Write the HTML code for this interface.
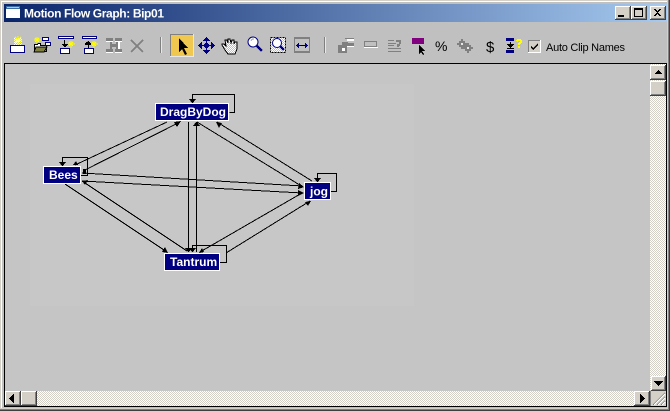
<!DOCTYPE html>
<html><head><meta charset="utf-8"><style>
html,body{margin:0;padding:0;width:670px;height:411px;overflow:hidden;background:#c0c0c0}
svg{display:block;position:absolute;left:0;top:0}
text{font-family:"Liberation Sans",sans-serif}
</style></head><body>
<svg width="670" height="411" viewBox="0 0 670 411" xmlns="http://www.w3.org/2000/svg">
<defs>
<linearGradient id="tb" x1="0" x2="1" y1="0" y2="0"><stop offset="0" stop-color="#0a246a"/><stop offset="1" stop-color="#a6caf0"/></linearGradient>
<pattern id="ck" width="2" height="2" patternUnits="userSpaceOnUse"><rect width="2" height="2" fill="#fff"/><rect width="1" height="1" fill="#d4d0c8"/><rect x="1" y="1" width="1" height="1" fill="#d4d0c8"/></pattern>
<pattern id="ck2" width="2" height="2" patternUnits="userSpaceOnUse"><rect width="2" height="2" fill="#c0c0c0"/><rect width="1" height="1" fill="#fff"/><rect x="1" y="1" width="1" height="1" fill="#fff"/></pattern>
</defs>

<!-- frame -->
<g shape-rendering="crispEdges">
<rect width="670" height="411" fill="#404040"/>
<rect width="669" height="410" fill="#808080"/>
<rect width="668" height="409" fill="#d4d0c8"/>
<rect x="1" y="1" width="666" height="407" fill="#fff"/>
<rect x="2" y="2" width="665" height="406" fill="#c0c0c0"/>
<!-- title -->
<rect x="4" y="4" width="663" height="18" fill="url(#tb)"/>
<rect x="6" y="6" width="14" height="12" fill="#fff"/>
<rect x="6" y="6" width="14" height="3" fill="#3a6ea5"/>
<rect x="7" y="7" width="12" height="1" fill="#a6caf0"/>
</g>
<text x="24" y="17.5" font-size="12" font-weight="bold" fill="#fff" textLength="140" lengthAdjust="spacing">Motion Flow Graph: Bip01</text>
<g shape-rendering="crispEdges">
<!-- caption buttons -->
<g id="cb">
<rect x="615" y="6" width="16" height="14" fill="#404040"/><rect x="615" y="6" width="15" height="13" fill="#fff"/><rect x="616" y="7" width="14" height="12" fill="#808080"/><rect x="616" y="7" width="13" height="11" fill="#d4d0c8"/>
<rect x="618" y="15" width="6" height="2" fill="#000"/>
<rect x="631" y="6" width="16" height="14" fill="#404040"/><rect x="631" y="6" width="15" height="13" fill="#fff"/><rect x="632" y="7" width="14" height="12" fill="#808080"/><rect x="632" y="7" width="13" height="11" fill="#d4d0c8"/>
<rect x="634.5" y="8.5" width="8" height="8" fill="none" stroke="#000"/><rect x="634" y="8" width="9" height="2" fill="#000"/>
<rect x="650" y="6" width="16" height="14" fill="#404040"/><rect x="650" y="6" width="15" height="13" fill="#fff"/><rect x="651" y="7" width="14" height="12" fill="#808080"/><rect x="651" y="7" width="13" height="11" fill="#d4d0c8"/>
<path d="M654 9h2v1h1v1h1v-1h1v-1h2v1h-1v1h-1v1h-1v1h1v1h1v1h1v1h-2v-1h-1v-1h-1v1h-1v1h-2v-1h1v-1h1v-1h1v-1h-1v-1h-1v-1h-1z" fill="#000"/>
</g>

<!-- canvas -->
<rect x="4" y="63" width="663" height="344" fill="#000"/>
<rect x="5" y="64" width="661" height="342" fill="#c5c5c5"/>
<rect x="30" y="84" width="384" height="222" fill="#c7c7c7"/>

<!-- scrollbars -->
<rect x="650" y="64" width="16" height="327" fill="url(#ck)"/>
<rect x="5" y="391" width="645" height="15" fill="url(#ck)"/>
<rect x="650" y="391" width="16" height="15" fill="#d4d0c8"/>
<rect x="650" y="391" width="1" height="15" fill="#808080"/>
<path d="M665 393l-12 12M665 397l-8 8M665 401l-4 4" stroke="#808080" fill="none"/>
<path d="M665 394l-11 11M665 398l-7 7M665 402l-3 3" stroke="#fff" fill="none"/>
<!-- sb buttons -->
<g>
<rect x="650" y="65" width="16" height="15" fill="#404040"/><rect x="650" y="65" width="15" height="14" fill="#fff"/><rect x="651" y="66" width="14" height="13" fill="#808080"/><rect x="651" y="66" width="13" height="12" fill="#d4d0c8"/>
<path d="M658 70h1v1h1v1h1v1h1v1h-7v-1h1v-1h1v-1h1z" fill="#000"/>
<rect x="650" y="81" width="16" height="15" fill="#404040"/><rect x="650" y="81" width="15" height="14" fill="#fff"/><rect x="651" y="82" width="14" height="13" fill="#808080"/><rect x="651" y="82" width="13" height="12" fill="#d4d0c8"/>
<rect x="651" y="376" width="15" height="15" fill="#404040"/><rect x="651" y="376" width="14" height="14" fill="#fff"/><rect x="652" y="377" width="13" height="13" fill="#808080"/><rect x="652" y="377" width="12" height="12" fill="#d4d0c8"/>
<path d="M654 381h9v1h-1v1h-1v1h-1v1h-1v1h-1v-1h-1v-1h-1v-1h-1v-1h-1z" fill="#000"/>
<rect x="5" y="391" width="16" height="15" fill="#404040"/><rect x="5" y="391" width="15" height="14" fill="#fff"/><rect x="6" y="392" width="14" height="13" fill="#808080"/><rect x="6" y="392" width="13" height="12" fill="#d4d0c8"/>
<path d="M14 394v9h-1v-1h-1v-1h-1v-1h-1v-1h-1v-1h1v-1h1v-1h1v-1h1v-1z" fill="#000"/>
<rect x="21" y="391" width="16" height="15" fill="#404040"/><rect x="21" y="391" width="15" height="14" fill="#fff"/><rect x="22" y="392" width="14" height="13" fill="#808080"/><rect x="22" y="392" width="13" height="12" fill="#d4d0c8"/>
<rect x="634" y="391" width="16" height="15" fill="#404040"/><rect x="634" y="391" width="15" height="14" fill="#fff"/><rect x="635" y="392" width="14" height="13" fill="#808080"/><rect x="635" y="392" width="13" height="12" fill="#d4d0c8"/>
<path d="M640 394v9h1v-1h1v-1h1v-1h1v-1h1v-1h-1v-1h-1v-1h-1v-1h-1v-1z" fill="#000"/>
</g>

<!-- toolbar: icon 1 new -->
<rect x="10.500" y="45.500" width="14" height="7" fill="#fff" stroke="#000080"/>
<rect x="14" y="38" width="8" height="7" fill="url(#ck2)"/>
<path d="M18 36v9M14 40h8M15 37l6 6M21 37l-6 6" stroke="#ffff00" fill="none"/>
<rect x="16" y="39" width="4" height="3" fill="#ffffa0"/>
<!-- icon 2 open -->
<path d="M34.500 44.500h3v-1h3v2h6v6h-12z" fill="#fff" stroke="#000"/>
<path d="M34 52l2-5h11l-3 5z" fill="#808040" stroke="#000"/>
<path d="M37 37v7M34 40h7M35 38l4 4M39 38l-4 4" stroke="#ffff00" fill="none"/>
<rect x="42.500" y="37.500" width="6" height="3" fill="#fff" stroke="#000080"/>
<rect x="45.500" y="42.500" width="5" height="3" fill="#fff" stroke="#000080"/>
<!-- icon 3 -->
<rect x="58.500" y="36.500" width="15" height="2" fill="#fff" stroke="#000080"/>
<rect x="60.500" y="48.500" width="9" height="5" fill="#fff" stroke="#000080"/>
<path d="M64.500 40v6" stroke="#000" fill="none"/><path d="M62 44h6v1h-1v1h-1v1h-2v-1h-1v-1h-1z" fill="#000"/>
<path d="M71 41v7M68 44h7M69 42l4 4M73 42l-4 4" stroke="#ffff00" fill="none"/>
<!-- icon 4 -->
<rect x="82.500" y="36.500" width="14" height="2" fill="#fff" stroke="#000080"/>
<rect x="84.500" y="48.500" width="9" height="5" fill="#fff" stroke="#000080"/>
<path d="M88.500 43v5" stroke="#000" fill="none"/><path d="M88 41h1v1h1v1h1v2h-6v-2h1v-1h1z" fill="#000"/>
<path d="M94 41v7M91 44h7M92 42l4 4M96 42l-4 4" stroke="#ffff00" fill="none"/>
<!-- icon 5 disabled -->
<rect x="106" y="38" width="7" height="3" fill="#808080"/><rect x="115" y="38" width="7" height="3" fill="#808080"/>
<rect x="106" y="49" width="7" height="3" fill="#808080"/><rect x="115" y="49" width="7" height="3" fill="#808080"/>
<rect x="106" y="41" width="7" height="1" fill="#fff"/><rect x="115" y="41" width="7" height="1" fill="#fff"/>
<rect x="106" y="52" width="7" height="1" fill="#fff"/><rect x="115" y="52" width="7" height="1" fill="#fff"/>
<rect x="110" y="42" width="2" height="7" fill="#808080"/><rect x="116" y="42" width="2" height="7" fill="#808080"/>
<rect x="112" y="44" width="4" height="3" fill="#808080"/><rect x="118" y="42" width="2" height="7" fill="#fff"/>
<!-- icon 6 X -->
<path d="M131 40l12 12M143 40l-12 12" stroke="#808080" stroke-width="1.800" fill="none"/>
<!-- separators -->
<rect x="160" y="37" width="1" height="16" fill="#808080"/><rect x="161" y="37" width="1" height="16" fill="#e8e8e8"/>
<rect x="324" y="37" width="1" height="16" fill="#808080"/><rect x="325" y="37" width="1" height="16" fill="#e8e8e8"/>
<!-- select button -->
<rect x="170" y="34" width="24" height="23" fill="#e8e8e8"/>
<rect x="170" y="34" width="23" height="22" fill="#808080"/>
<rect x="171" y="35" width="22" height="21" fill="#f0c850"/>
<path d="M179 38l0 14 3-3 3 6 2-1-3-6h4z" fill="#000"/>
<!-- move -->
<g fill="#000080">
<rect x="206" y="39" width="1" height="13"/><rect x="200" y="45" width="13" height="1"/>
<rect x="205" y="43" width="3" height="5"/><rect x="204" y="44" width="5" height="3"/>
<path d="M206 37h1v1h1v1h1v1h1v1h-7v-1h1v-1h1v-1h1z"/>
<path d="M206 54h1v-1h1v-1h1v-1h1v-1h-7v1h1v1h1v1h1z"/>
<path d="M198 45v1h1v1h1v1h1v1h1v-7h-1v1h-1v1h-1v1z"/>
<path d="M215 45v1h-1v1h-1v1h-1v1h-1v-7h1v1h1v1h1v1z"/>
</g>
<!-- hand -->
<path d="M228 54l-3-4-3-5v-1h2l2 2-1-6h2l1 3v-4h2l1 4 1-3h2l0 4 1-2h2v7l-2 5z" fill="url(#ck2)" stroke="#000"/>
<!-- zoom -->
<circle cx="253" cy="42" r="5" fill="#fff" stroke="#000080" stroke-width="1" shape-rendering="auto"/>
<path d="M251 41a2.500 2.500 0 0 1 3-2" stroke="#a0a0a0" fill="none"/>
<path d="M257 46l5 5" stroke="#000080" stroke-width="2.400" fill="none"/>
<!-- zoom region -->
<rect x="270" y="37" width="16" height="15" fill="url(#ck2)"/>
<rect x="270.500" y="37.500" width="15" height="15" fill="none" stroke="#000" stroke-dasharray="2 1"/>
<circle cx="277" cy="43" r="4.500" fill="#fff" stroke="#000080" shape-rendering="auto"/>
<path d="M280 46l4 4" stroke="#000080" stroke-width="2.200" fill="none"/>
<!-- zoom extents -->
<rect x="294" y="37" width="16" height="2" fill="#808080"/><rect x="294" y="51" width="16" height="2" fill="#808080"/>
<rect x="294" y="37" width="1" height="16" fill="#808080"/><rect x="309" y="37" width="1" height="16" fill="#808080"/>
<rect x="297" y="45" width="11" height="1" fill="#000"/>
<path d="M296 45h1v-1h1v-1h1v5h-1v-1h-1v-1h-1zM308 45h-1v-1h-1v-1h-1v5h1v-1h1v-1h1z" fill="#000080"/>

<!-- disabled group -->
<rect x="338" y="45" width="9" height="8" fill="#808080"/>
<rect x="342" y="42" width="6" height="3" fill="#808080"/><rect x="345" y="38" width="9" height="1" fill="#808080"/>
<rect x="347" y="39" width="7" height="2" fill="#fff"/><rect x="347" y="43" width="7" height="3" fill="#808080"/><rect x="347" y="46" width="7" height="1" fill="#fff"/>
<rect x="342" y="48" width="3" height="3" fill="#fff"/>
<rect x="364.500" y="41.500" width="12" height="5" fill="none" stroke="#808080"/><rect x="364" y="47" width="14" height="1" fill="#fff"/>
<g fill="#808080"><rect x="388" y="40" width="6" height="1"/><rect x="388" y="43" width="8" height="1"/><rect x="388" y="45" width="6" height="1"/><rect x="388" y="48" width="13" height="1"/><rect x="388" y="51" width="13" height="1"/><rect x="396" y="40" width="5" height="2"/><rect x="399" y="42" width="2" height="2"/><rect x="397" y="44" width="3" height="2"/><rect x="397" y="46" width="2" height="1"/></g>
<!-- purple -->
<rect x="412" y="38" width="12" height="6" fill="#800080"/>
<path d="M419 45v9l2-2 2 3 1-1-2-3h3z" fill="#000"/>
<!-- % glyph lines -->
<!-- gears -->
<path d="M461 39h2v2h2v2h2v2h-2v2h-2v2h-2v-2h-2v-2h-2v-2h2v-2h2z" fill="#808080"/><rect x="461" y="43" width="2" height="2" fill="#e8e8e8"/>
<path d="M467 43h2v2h2v2h2v2h-2v2h-2v2h-2v-2h-2v-2h-2v-2h2v-2h2z" fill="#808080"/><rect x="467" y="47" width="2" height="2" fill="#e8e8e8"/>
<!-- I icon -->
<rect x="506" y="38" width="8" height="3" fill="#000080"/><rect x="506" y="50" width="8" height="3" fill="#000080"/>
<rect x="510" y="42" width="1" height="4" fill="#000"/>
<path d="M507 44h7v1h-1v1h-1v1h-1v1h-1v-1h-1v-1h-1v-1h-1z" fill="#000"/><rect x="507" y="48" width="7" height="1" fill="#000"/>
<path d="M516 41v-1h1v-1h4v1h1v3h-1v1h-1v1h-2v-2h1v-1h1v-1h-2v1z" fill="#ffff00"/><rect x="518" y="46" width="2" height="2" fill="#ffff00"/>
<!-- checkbox -->
<rect x="528" y="40" width="13" height="13" fill="#fff"/>
<rect x="528" y="40" width="12" height="12" fill="#808080"/>
<rect x="529" y="41" width="11" height="11" fill="#d4d0c8"/>
<path d="M531 46l2 2 5-5v2l-5 5-2-2z" fill="#000"/>
</g>
<text x="435" y="51" font-size="14" fill="#000">%</text>
<text x="486" y="52" font-size="15" fill="#000">$</text>
<text x="546" y="51" font-size="11" fill="#000" textLength="79" lengthAdjust="spacing">Auto Clip Names</text>

<!-- graph -->
<g shape-rendering="crispEdges" stroke="#000" fill="none">
<path d="M229.500 112.500h5v-18h-42v8"/>
<path d="M81 175.500h6.500v-18h-25v8"/>
<path d="M331 191.500h5.500v-18h-19v8"/>
<path d="M220 262.500h6.500v-17h-34v6"/>
<path d="M188.500 122v130M196.500 122v130"/>
<path d="M167 122L75 165"/>
<path d="M83 171L180 122"/>
<path d="M82 173L302 186"/>
<path d="M82 181L302 193"/>
<path d="M65 184L167 252"/>
<path d="M187 251L82 181"/>
<path d="M200 252L302 193"/>
<path d="M226 253L310 201"/>
<path d="M217 122L312 181"/>
<path d="M197 122L303 187"/>
</g>
<g fill="#000" shape-rendering="crispEdges">
<path d="M189 99h7l-3.500 4.500z"/><path d="M59 162h7l-3.500 4.500z"/><path d="M314 178h7l-3.500 4.500z"/><path d="M189 248h7l-3.500 4.500z"/>
<path d="M185 248h7l-3.500 4.500z"/>
<path d="M193 126h7l-3.500-4.500z"/>
<path d="M181 121l-7 1 3 5z"/>
<path d="M73 165h5l-2-4z"/>
<path d="M84 169h2v5h-3v-5z"/>
<path d="M82 181l6-1-3 5z"/>
<path d="M168 253l-6-1 3-5z"/>
<path d="M199 253l5-1-2-4z"/>
<path d="M216 122l6 1-3 5z"/>
<path d="M304 187l-6 2 1-6z"/>
<path d="M304 193l-6 3 0-6z"/>
<path d="M311 201l-6 1 3 4z"/>
</g>
<g shape-rendering="crispEdges">
<rect x="155" y="103" width="74" height="18" fill="#fff"/><rect x="156" y="104" width="72" height="16" fill="#000080"/>
<rect x="43" y="166" width="38" height="18" fill="#fff"/><rect x="44" y="167" width="36" height="16" fill="#000080"/>
<rect x="304" y="182" width="27" height="18" fill="#fff"/><rect x="305" y="183" width="25" height="16" fill="#000080"/>
<rect x="164" y="253" width="56" height="18" fill="#fff"/><rect x="165" y="254" width="54" height="16" fill="#000080"/>
</g>
<g font-size="12" font-weight="bold" fill="#fff">
<text x="160" y="116">DragByDog</text>
<text x="49" y="179">Bees</text>
<text x="310" y="195.500">jog</text>
<text x="170" y="266">Tantrum</text>
</g>
</svg>
</body></html>
